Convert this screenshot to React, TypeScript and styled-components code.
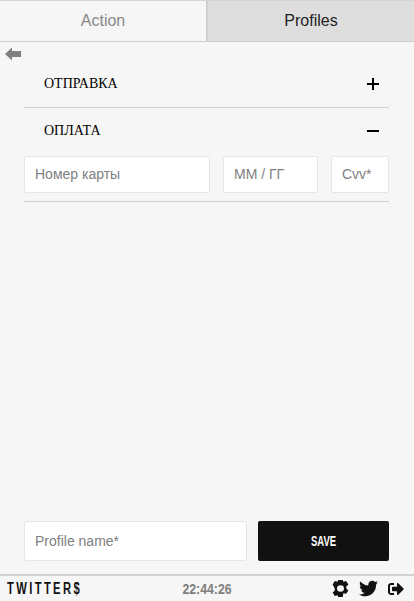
import React from 'react';
import styled, { createGlobalStyle } from 'styled-components';
import { FaTwitter, FaSignOutAlt } from 'react-icons/fa';

const Global = createGlobalStyle`
  html, body { margin: 0; padding: 0; height: 100%; }
  body { background: #f6f6f6; font-family: "Liberation Sans", Arial, sans-serif; }
  #root { height: 100%; }
`;

const Page = styled.div`
  display: flex;
  flex-direction: column;
  width: 414px;
  height: 601px;
  overflow: hidden;
`;

const Tabs = styled.div`
  display: flex;
  height: 42px;
  box-sizing: border-box;
  border-top: 1px solid #d4d4d4;
  border-bottom: 1px solid #cfcfcf;
`;

const Tab = styled.div<{ $active?: boolean }>`
  flex: 1;
  display: flex;
  align-items: center;
  justify-content: center;
  font-size: 16px;
  color: ${({ $active }) => ($active ? '#222' : '#888')};
  background: ${({ $active }) => ($active ? '#dedede' : '#f6f6f6')};
  border-left: ${({ $active }) => ($active ? '2px solid #cfcfcf' : '0')};
`;

const Main = styled.div`
  flex: 1;
  display: flex;
  flex-direction: column;
  min-height: 0;
`;

const BackRow = styled.div`
  height: 18px;
  padding: 5px 0 0 5px;
  box-sizing: border-box;
  color: #808080;
`;

const Accordion = styled.div`
  margin: 0 25px 0 24px;
`;

const Section = styled.section`
  border-bottom: 1px solid #cfcfcf;
`;

const SectionHead = styled.div<{ $h: number }>`
  display: flex;
  align-items: center;
  justify-content: space-between;
  height: ${({ $h }) => $h}px;
  padding: 0 10px 0 20px;
  font-family: "Liberation Serif", "Times New Roman", serif;
  font-size: 14px;
  color: #000;
`;

const Sign = styled.svg`
  width: 12px;
  height: 12px;
  display: block;
`;

const CardFields = styled.div`
  display: grid;
  grid-template-columns: 186px 95px 58px;
  column-gap: 13px;
  padding-top: 3px;
  padding-bottom: 8px;
`;

const Field = styled.input<{ $h?: number }>`
  box-sizing: border-box;
  width: 100%;
  height: ${({ $h }) => $h ?? 37}px;
  padding: 0 10px 1px;
  border: 1px solid #e6e6e6;
  border-radius: 2px;
  background: #fff;
  font-family: "Liberation Sans", Arial, sans-serif;
  font-size: 14px;
  outline: none;
  &::placeholder { color: #808080; opacity: 1; }
`;

const ProfileBar = styled.div`
  margin-top: auto;
  display: grid;
  grid-template-columns: 223px 131px;
  column-gap: 11px;
  padding: 0 25px 13px 24px;
`;

const SaveButton = styled.button`
  height: 40px;
  border: 0;
  border-radius: 2px;
  background: #111;
  color: #fff;
  font-family: "Liberation Sans", Arial, sans-serif;
  font-size: 14px;
  font-weight: 700;
`;

const Squeezed = styled.span<{ $x: number; $origin?: string }>`
  display: inline-block;
  transform: scaleX(${({ $x }) => $x});
  transform-origin: ${({ $origin }) => $origin ?? 'center'};
`;

const Footer = styled.footer`
  display: grid;
  grid-template-columns: 1fr auto 1fr;
  align-items: center;
  height: 27px;
  box-sizing: border-box;
  padding: 0 10px;
  border-top: 2px solid #d2d2d2;
  background: #f6f6f6;
`;

const Brand = styled.div`
  margin-left: -3px;
  font-family: "Liberation Sans", Arial, sans-serif;
  font-weight: 700;
  font-size: 16px;
  letter-spacing: 3.4px;
  white-space: nowrap;
  color: #111;
`;

const Clock = styled.div`
  font-family: "Liberation Sans", Arial, sans-serif;
  font-weight: 700;
  font-size: 15px;
  color: #808080;
`;

const FooterIcons = styled.div`
  display: flex;
  align-items: center;
  justify-content: flex-end;
  gap: 10px;
  color: #111;
`;

const BackArrow = () => (
  <svg width="16" height="14" viewBox="0 0 16 14" style={{ display: 'block' }}>
    <path d="M0 7 L7 0.500 V4 H16 V10 H7 V13.500 Z" fill="currentColor" />
  </svg>
);

const Gear = () => (
  <svg width="17" height="17" viewBox="1.2 0.6 15.6 16.8" preserveAspectRatio="none" style={{ display: 'block' }}>
    <path
      fillRule="evenodd"
      fill="currentColor"
      d="M7 0h4l.6 2.400 2.600-.7 2 3.400-1.900 1.800v2.200l1.900 1.800-2 3.400-2.600-.7L11 18H7l-.6-2.400-2.600.7-2-3.400 1.900-1.800V8.900L1.800 5.100l2-3.400 2.600.7Z M9 5.800a3.200 3.200 0 1 0 0 6.400a3.200 3.200 0 1 0 0-6.400Z"
    />
  </svg>
);

export default function App() {
  return (
    <Page>
      <Global />
      <Tabs>
        <Tab>Action</Tab>
        <Tab $active>Profiles</Tab>
      </Tabs>
      <Main>
        <BackRow>
          <BackArrow />
        </BackRow>
        <Accordion>
          <Section>
            <SectionHead $h={47}>
              ОТПРАВКА
              <Sign viewBox="0 0 12 12">
                <path d="M0 6h12M6 0v12" stroke="#000" strokeWidth="2" />
              </Sign>
            </SectionHead>
          </Section>
          <Section>
            <SectionHead $h={45}>
              ОПЛАТА
              <Sign viewBox="0 0 12 12">
                <path d="M0 6h12" stroke="#000" strokeWidth="2" />
              </Sign>
            </SectionHead>
            <CardFields>
              <Field placeholder="Номер карты" />
              <Field placeholder="ММ / ГГ" />
              <Field placeholder="Cvv*" />
            </CardFields>
          </Section>
        </Accordion>
        <ProfileBar>
          <Field $h={40} placeholder="Profile name*" />
          <SaveButton>
            <Squeezed $x={0.68}>SAVE</Squeezed>
          </SaveButton>
        </ProfileBar>
      </Main>
      <Footer>
        <Brand>
          <Squeezed $x={0.7} $origin="left">TWITTER$</Squeezed>
        </Brand>
        <Clock>
          <Squeezed $x={0.82}>22:44:26</Squeezed>
        </Clock>
        <FooterIcons>
          <Gear />
          <FaTwitter size={19} />
          <FaSignOutAlt size={16} />
        </FooterIcons>
      </Footer>
    </Page>
  );
}
